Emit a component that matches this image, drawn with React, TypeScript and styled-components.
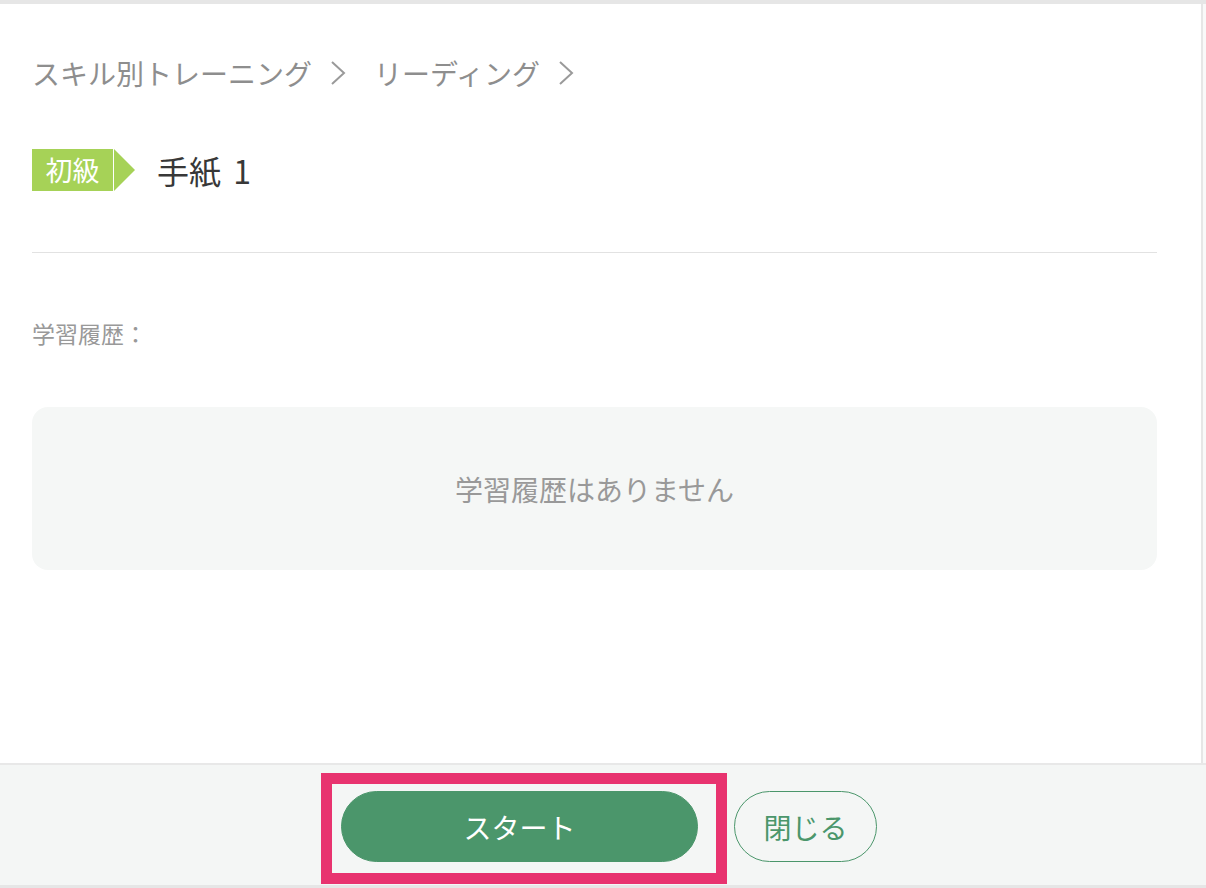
import styled, { createGlobalStyle } from "styled-components";

const GlobalStyle = createGlobalStyle`
  html, body {
    margin: 0;
    padding: 0;
    background: #ffffff;
  }
  body {
    font-family: "Noto Sans CJK JP", "Noto Sans", sans-serif;
  }
  * {
    box-sizing: border-box;
  }
`;

const Page = styled.div`
  width: 1206px;
  height: 888px;
  display: flex;
  flex-direction: column;
  border-top: 4px solid #e6e6e6;
  border-bottom: 3px solid #e6e6e6;
`;

const Main = styled.div`
  flex: 1;
  display: flex;
  min-height: 0;
`;

const Content = styled.div`
  flex: 1;
  padding: 0 44px 0 32px;
  display: flex;
  flex-direction: column;
`;

const Gutter = styled.div`
  width: 5px;
  border-left: 2px solid #e6e6e6;
  background: #f9f9f9;
`;

const Breadcrumb = styled.nav`
  margin-top: 49px;
  height: 40px;
  display: flex;
  align-items: center;
  color: #8e8e8e;
  font-size: 28px;
  line-height: 40px;
`;

const Crumb = styled.span`
  white-space: nowrap;
`;

const Chevron = styled.svg`
  width: 16px;
  height: 26px;
  margin: 0 28px 0 18px;
  flex-shrink: 0;
`;

const Heading = styled.div`
  margin-top: 56px;
  height: 42px;
  display: flex;
  align-items: center;
`;

const Badge = styled.div`
  position: relative;
  height: 42px;
  width: 81px;
  background: #a6d257;
  color: #ffffff;
  font-size: 27px;
  line-height: 42px;
  text-align: center;
  margin-right: 44px;
  &::after {
    content: "";
    position: absolute;
    left: 82px;
    top: 0;
    border-top: 21px solid transparent;
    border-bottom: 21px solid transparent;
    border-left: 21px solid #a6d257;
  }
`;

const Title = styled.h1`
  margin: 0;
  font-size: 32px;
  font-weight: 400;
  color: #383838;
  line-height: 42px;
  word-spacing: 5px;
`;

const Divider = styled.hr`
  margin: 61px 0 0;
  border: none;
  border-top: 1px solid #e2e2e2;
`;

const Label = styled.div`
  margin-top: 64px;
  font-size: 23px;
  line-height: 32px;
  color: #999999;
`;

const EmptyBox = styled.div`
  margin-top: 58px;
  height: 163px;
  border-radius: 16px;
  background: #f5f7f6;
  display: flex;
  align-items: center;
  justify-content: center;
  color: #999999;
  font-size: 28px;
`;

const Footer = styled.footer`
  height: 122px;
  border-top: 2px solid #e8e8e8;
  background: #f4f6f5;
  display: flex;
  justify-content: center;
  align-items: flex-start;
  padding: 26px 0 0 12px;
  gap: 36px;
`;

const Button = styled.button<{ $primary?: boolean }>`
  position: relative;
  height: 71px;
  width: ${(p) => (p.$primary ? "357px" : "143px")};
  border-radius: 36px;
  border: 1px solid #4b966b;
  background: ${(p) => (p.$primary ? "#4b966b" : "transparent")};
  color: ${(p) => (p.$primary ? "#ffffff" : "#4b966b")};
  font-family: inherit;
  font-size: 28px;
  cursor: pointer;
  padding: 0;
`;

const Highlight = styled.div`
  position: relative;
  &::before {
    content: "";
    position: absolute;
    left: -20px;
    right: -29px;
    top: -18px;
    bottom: -22px;
    border: 11px solid #e8336f;
    pointer-events: none;
  }
`;

const ChevronIcon = () => (
  <Chevron viewBox="0 0 16 26">
    <path
      d="M2 2 L14 13 L2 24"
      fill="none"
      stroke="#9a9a9a"
      strokeWidth="2"
      strokeLinejoin="miter"
    />
  </Chevron>
);

export default function App() {
  return (
    <>
      <GlobalStyle />
      <Page>
        <Main>
          <Content>
            <Breadcrumb>
              <Crumb>スキル別トレーニング</Crumb>
              <ChevronIcon />
              <Crumb>リーディング</Crumb>
              <ChevronIcon />
            </Breadcrumb>
            <Heading>
              <Badge>初級</Badge>
              <Title>手紙 1</Title>
            </Heading>
            <Divider />
            <Label>学習履歴：</Label>
            <EmptyBox>学習履歴はありません</EmptyBox>
          </Content>
          <Gutter />
        </Main>
        <Footer>
          <Highlight>
            <Button $primary>スタート</Button>
          </Highlight>
          <Button>閉じる</Button>
        </Footer>
      </Page>
    </>
  );
}
